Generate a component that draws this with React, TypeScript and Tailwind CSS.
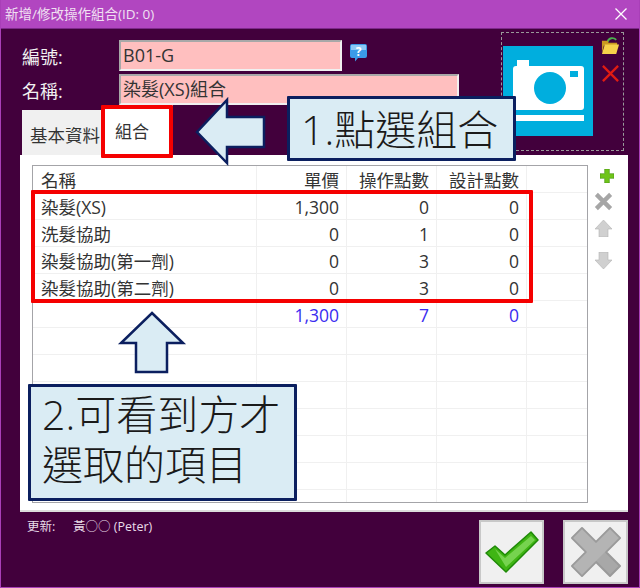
const rows = [
  { name: '染髮(XS)', price: '1,300', op: '0', design: '0' },
  { name: '洗髮協助', price: '0', op: '1', design: '0' },
  { name: '染髮協助(第一劑)', price: '0', op: '3', design: '0' },
  { name: '染髮協助(第二劑)', price: '0', op: '3', design: '0' },
]

const emptyRows = [0, 1, 2, 3, 4, 5, 6]

function Row({ cells, className = '' }: { cells: string[]; className?: string }) {
  return (
    <div className={`grid grid-cols-[224px_90px_90px_90px_1fr] h-[27px] border-b border-[#f0f0f0] leading-[28px] ${className}`}>
      <div className="pl-[8px] border-r border-[#f0f0f0] whitespace-nowrap">{cells[0]}</div>
      <div className="pr-[7px] text-right border-r border-[#f0f0f0] whitespace-nowrap">{cells[1]}</div>
      <div className="pr-[7px] text-right border-r border-[#f0f0f0] whitespace-nowrap">{cells[2]}</div>
      <div className="pr-[7px] text-right border-r border-[#f0f0f0] whitespace-nowrap">{cells[3]}</div>
      <div />
    </div>
  )
}

function FieldRow({ label, value, width, children }: { label: string; value: string; width: string; children?: React.ReactNode }) {
  return (
    <div className="flex items-center h-[31px]">
      <div className="w-[97px] pt-[3px] text-[18px] text-[#f0f0f0]">{label}</div>
      <div className={`${width} h-[31px] bg-[#ffbfbf] border-2 border-t-[#a8a8a8] border-l-[#a8a8a8] border-r-[#f0f0f0] border-b-[#f0f0f0] pl-[2px] text-[18px] leading-[26px] text-[#333]`}>
        {value}
      </div>
      {children}
    </div>
  )
}

export default function App() {
  return (
    <div className="relative w-[640px] h-[588px] overflow-hidden flex flex-col bg-[#42003c] border-x border-b border-[#a93fb8] [font-family:'Open_Sans','Noto_Sans_CJK_TC',sans-serif]">
      {/* Title bar */}
      <div className="h-[29px] -mx-px flex items-center justify-between pl-[5px] pr-[13px] bg-[#b146c0] text-[13.5px] text-[#f0e0f2] border-b border-[#7d2a8a]">
        <span>新增/修改操作組合(ID: 0)</span>
        <svg width="12" height="12" viewBox="0 0 12 12" stroke="#fff" strokeWidth="1.3" fill="none">
          <path d="M0.5 0.5 11.5 11.5M11.5 0.5 0.5 11.5" />
        </svg>
      </div>

      {/* Top form */}
      <div className="h-[126px] flex pl-[21px]">
        <div className="w-[479px] pt-[11px] flex flex-col">
          <FieldRow label="編號:" value="B01-G" width="w-[223px]">
            <svg className="ml-[7px] -mt-[7px]" width="19" height="19" viewBox="0 0 19 19">
              <path d="M3 1h13a2 2 0 0 1 2 2v10a2 2 0 0 1-2 2H9l-3 3.5V15H3a2 2 0 0 1-2-2V3a2 2 0 0 1 2-2z" fill="#3a9be8" />
              <path d="M2 2h15v5H2z" fill="#8cc8f5" />
              <text x="9.5" y="12.5" fontSize="12" fontWeight="700" textAnchor="middle" fill="#fff">?</text>
            </svg>
          </FieldRow>
          <div className="h-[3px]" />
          <FieldRow label="名稱:" value="染髮(XS)組合" width="w-[340px]" />
          <div className="flex items-end h-[50px]">
            <div className="w-[80px] h-[45px] bg-[#f0f0f0] pl-[8px] pt-[12px] text-[17.5px] text-[#333] whitespace-nowrap">基本資料</div>
            <div className="w-[71px] h-[50px] bg-white pl-[13px] pt-[14px] text-[17px] text-[#333]">組合</div>
          </div>
        </div>
        <div className="mt-[3px] w-[123px] h-[119px] border border-dashed border-[#999] flex pl-[1px] pt-[13px]">
          <svg width="90" height="90" viewBox="0 0 90 90">
            <rect width="90" height="90" fill="#00aede" />
            <rect x="14" y="14" width="12" height="8" fill="#fff" />
            <rect x="10" y="20" width="71" height="44" rx="3" fill="#fff" />
            <circle cx="47" cy="42" r="16" fill="#00aede" />
            <rect x="67" y="25" width="8" height="6" fill="#00aede" />
            <rect x="10" y="69" width="71" height="6" fill="#fff" />
          </svg>
          <div className="flex flex-col ml-[8px] -mt-[10px] gap-[9px]">
            <svg width="19" height="19" viewBox="0 0 20 20">
              <path d="M7 6c1-4 6-5 9-2" fill="none" stroke="#4caf50" strokeWidth="2" />
              <path d="M1 5h6l1 2h9v3H3L1 18z" fill="#c99a20" />
              <path d="M4 9h15l-3 10H1z" fill="#f6d24a" />
            </svg>
            <svg width="19" height="19" viewBox="0 0 20 20" stroke="#e01b12" strokeWidth="2.4" fill="none">
              <path d="M2 2 18 18M18 2 2 18" />
            </svg>
          </div>
        </div>
      </div>

      {/* Tab panel */}
      <div className="ml-[19px] w-[608px] h-[357px] bg-white flex pl-[12px] pt-[10px] border-b-2 border-[#dcdcdc]">
        <div className="w-[556px] h-[338px] overflow-hidden border border-[#a4a4a8] text-[17.5px] text-[#333]">
          <Row cells={['名稱', '單價', '操作點數', '設計點數']} />
          {rows.map((r) => (
            <Row key={r.name} cells={[r.name, r.price, r.op, r.design]} />
          ))}
          <Row cells={['', '1,300', '7', '0']} className="text-[#3a2cf0]" />
          {emptyRows.map((i) => (
            <Row key={i} cells={['', '', '', '']} />
          ))}
        </div>
        <div className="w-[30px] pl-[1px] pt-[4px] flex flex-col items-center">
          <svg className="ml-[6px]" width="14" height="14" viewBox="0 0 15 15">
            <path d="M5 0h5v5h5v5h-5v5H5v-5H0V5h5z" fill="#6fc41a" stroke="#3f8a10" strokeWidth="0.6" />
          </svg>
          <svg className="mt-[9px]" width="19" height="19" viewBox="0 0 20 20" stroke="#a6a6a6" strokeWidth="4.5" fill="none">
            <path d="M2.5 2.5 17.5 17.5M17.5 2.5 2.5 17.5" />
          </svg>
          <svg className="mt-[9px]" width="17" height="17" viewBox="0 0 17 17">
            <path d="M8.5 0 17 9h-4v8H4V9H0z" fill="#d0d0d0" stroke="#b4b4b4" strokeWidth="0.6" />
          </svg>
          <svg className="mt-[15px]" width="17" height="17" viewBox="0 0 17 17">
            <path d="M4 0h9v8h4l-8.5 9L0 8h4z" fill="#d0d0d0" stroke="#b4b4b4" strokeWidth="0.6" />
          </svg>
        </div>
      </div>

      {/* Footer */}
      <div className="flex-1 flex pl-[26px]">
        <div className="w-[452px] flex pt-[6px] text-[12.5px] leading-[18px] text-[#e8dce8]">
          <span className="w-[46px]">更新:</span>
          <span>黃○○ (Peter)</span>
        </div>
        <div className="flex gap-[19px] pt-[8px]">
          <button className="w-[65px] h-[64px] flex items-center justify-center bg-[#f0f0f0] border-2 border-[#c8c8c8]">
            <svg width="54" height="42" viewBox="0 0 54 42">
              <path d="M1 22 10 15 20 24 46 1 53 9 21 41z" fill="#3fb513" stroke="#1f8a08" strokeWidth="1.5" strokeLinejoin="round" />
              <path d="M10 18 20 27 46 5 50 9 21 36z" fill="#8fe06a" opacity="0.7" />
            </svg>
          </button>
          <button className="w-[65px] h-[64px] flex items-center justify-center bg-[#f0f0f0] border-2 border-[#c8c8c8]">
            <svg width="52" height="52" viewBox="0 0 52 52">
              <path d="M12 2 26 16 40 2 50 12 36 26 50 40 40 50 26 36 12 50 2 40 16 26 2 12z" fill="#a8a8a8" stroke="#9a9a9a" strokeWidth="2" strokeLinejoin="round" />
              <path d="M12 3 26 17 40 3 49 12 12 49 3 40 17 26 3 12z" fill="#bcbcbc" opacity="0.6" />
            </svg>
          </button>
        </div>
      </div>

      {/* Tutorial annotations over the window */}
      <div className="absolute left-[100px] top-[105px] w-[72px] h-[53px] border-[4px] border-[#f50000] rounded-[1px]" />
      <div className="absolute left-[30px] top-[190px] w-[502px] h-[113px] border-[4px] border-[#f50000] rounded-[1px]" />
      <svg className="absolute left-[190px] top-[94px]" width="80" height="75" viewBox="0 0 80 75">
        <path d="M6 38 36 6V23H73V53H36V69z" fill="#daecf4" stroke="#0b1f5f" strokeWidth="2.5" />
      </svg>
      <svg className="absolute left-[113px] top-[306px]" width="76" height="72" viewBox="0 0 76 72">
        <path d="M38 7 69 37H53V66H22V37H7z" fill="#daecf4" stroke="#0b1f5f" strokeWidth="2.5" />
      </svg>
      <div className="absolute left-[286px] top-[96px] w-[229px] h-[65px] bg-[#daecf4] border-[3px] border-[#0b1f5f] rounded-[1px] pl-[11px] text-[41px] leading-[60px] text-[#1a1a1a] font-light whitespace-nowrap">
        1.點選組合
      </div>
      <div className="absolute left-[27px] top-[384px] w-[269px] h-[117px] bg-[#daecf4] border-[3px] border-[#0b1f5f] rounded-[1px] pl-[11px] pt-[2px] text-[41px] leading-[50px] text-[#1a1a1a] font-light whitespace-nowrap">
        2.可看到方才
        <br />
        選取的項目
      </div>
    </div>
  )
}
